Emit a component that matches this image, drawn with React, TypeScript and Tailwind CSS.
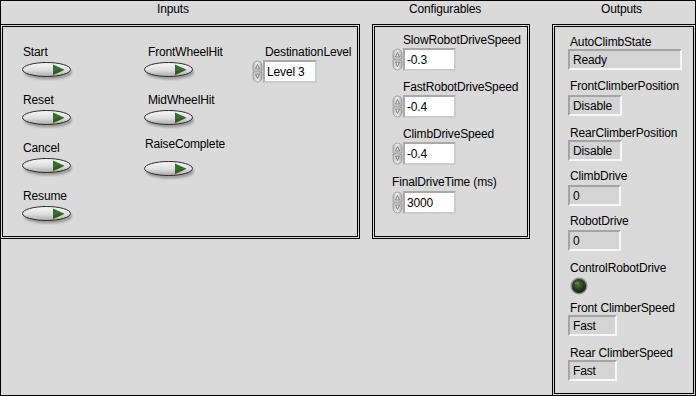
import type { ReactNode } from 'react';

// ─── Front Panel Data ─────────────────────────────────────────────────────────

const BUTTONS_LEFT = ['Start', 'Reset', 'Cancel', 'Resume'];

const CONFIGURABLES = [
  { label: 'SlowRobotDriveSpeed', value: '-0.3', labelClass: 'pl-[11px]', top: 'mt-0', boxTop: 'mt-px' },
  { label: 'FastRobotDriveSpeed', value: '-0.4', labelClass: 'pl-[11px]', top: 'mt-[9px]', boxTop: 'mt-px' },
  { label: 'ClimbDriveSpeed', value: '-0.4', labelClass: 'pl-[11px]', top: 'mt-[9px]', boxTop: 'mt-px' },
  { label: 'FinalDriveTime (ms)', value: '3000', labelClass: 'pl-0', top: 'mt-[10px]', boxTop: 'mt-[2px]' },
];

// ─── Small Drawings ───────────────────────────────────────────────────────────

function PushButton() {
  return (
    <svg width="52" height="20" viewBox="0 0 52 20" className="block">
      <defs>
        <linearGradient id="btnFill" x1="0" y1="0" x2="0" y2="1">
          <stop offset="0%" stopColor="#f8f8f8" />
          <stop offset="55%" stopColor="#dedede" />
          <stop offset="100%" stopColor="#a9a9a9" />
        </linearGradient>
        <filter id="btnShadow" x="-20%" y="-40%" width="140%" height="180%">
          <feGaussianBlur stdDeviation="1.1" />
        </filter>
      </defs>
      <ellipse cx="27" cy="11.5" rx="24" ry="7" fill="#5f5f5f" opacity="0.5" filter="url(#btnShadow)" />
      <ellipse cx="25.5" cy="8.5" rx="24" ry="7" fill="url(#btnFill)" stroke="#2a2a2a" strokeWidth="1" />
      <polygon points="32,3.5 32,14 43.5,8.75" fill="#2b7524" />
      <polygon points="32,10.5 32,14 43.5,8.75" fill="#5a3f1d" opacity="0.75" />
    </svg>
  );
}

function Spinner() {
  return (
    <svg width="11" height="23" viewBox="0 0 11 23" className="block shrink-0">
      <defs>
        <linearGradient id="spinFill" x1="0" y1="0" x2="1" y2="0">
          <stop offset="0%" stopColor="#bdbdbd" />
          <stop offset="50%" stopColor="#ececec" />
          <stop offset="100%" stopColor="#aaaaaa" />
        </linearGradient>
      </defs>
      <path d="M1 11 V5.5 A4.5 4.5 0 0 1 10 5.5 V11 Z" fill="url(#spinFill)" stroke="#949494" strokeWidth="0.8" />
      <path d="M1 12 V17.5 A4.5 4.5 0 0 0 10 17.5 V12 Z" fill="url(#spinFill)" stroke="#949494" strokeWidth="0.8" />
      <path d="M3.5 9 L5.5 4.5 L7.5 9 Z" fill="none" stroke="#767676" strokeWidth="0.9" />
      <path d="M3.5 14 L5.5 18.5 L7.5 14 Z" fill="none" stroke="#767676" strokeWidth="0.9" />
    </svg>
  );
}

function Led() {
  return (
    <svg width="18" height="18" viewBox="0 0 18 18" className="block">
      <defs>
        <radialGradient id="ledFill" cx="45%" cy="40%" r="60%">
          <stop offset="0%" stopColor="#4f6f3a" />
          <stop offset="60%" stopColor="#2a3f1c" />
          <stop offset="100%" stopColor="#142010" />
        </radialGradient>
      </defs>
      <circle cx="9" cy="9" r="8.5" fill="#8a8a8a" />
      <circle cx="9" cy="9" r="7" fill="url(#ledFill)" />
      <ellipse cx="7" cy="6" rx="2.5" ry="1.6" fill="#7d9a66" opacity="0.5" />
    </svg>
  );
}

// ─── Building Blocks ──────────────────────────────────────────────────────────

function Frame({ className, children }: { className: string; children: ReactNode }) {
  return (
    <div className={`border border-black p-px ${className}`}>
      <div className="h-full border border-black">{children}</div>
    </div>
  );
}

function NumericControl({ value, width = 'w-[53px]' }: { value: string; width?: string }) {
  return (
    <div className="flex items-start">
      <Spinner />
      <div
        className={`flex h-[23px] ${width} items-center border-2 border-[#cdcdcd] border-l-[#a9a9a9] border-t-[#a9a9a9] bg-white pl-[2px]`}
      >
        {value}
      </div>
    </div>
  );
}

function Indicator({ value, width, className = '' }: { value: string; width: string; className?: string }) {
  return (
    <div
      className={`flex h-[21px] ${width} items-center border-2 border-b-[#f7f7f7] border-l-[#a4a4a4] border-r-[#f7f7f7] border-t-[#a4a4a4] bg-[#d4d4d4] pl-[3px] ${className}`}
    >
      {value}
    </div>
  );
}

// ─── Component ────────────────────────────────────────────────────────────────

export default function App() {
  return (
    <div className="flex h-[396px] w-[696px] overflow-hidden bg-[#dadada] font-['Liberation_Sans',Arial,sans-serif] text-[12px] leading-[14px] tracking-[-0.15px] text-black shadow-[inset_0_0_0_1px_#000]">
      {/* Inputs */}
      <section className="flex w-[360px] flex-col">
        <h2 className="h-6 pl-[157px] pt-[2px] font-normal">Inputs</h2>
        <Frame className="h-[215px]">
          <div className="flex pl-[18px] pt-[18px]">
            <div className="w-[122px]">
              {BUTTONS_LEFT.map((name, i) => (
                <div key={name} className={i === 0 ? '' : 'mt-[12px]'}>
                  <p className="pl-[2px]">{name}</p>
                  <div className="mt-[2px]">
                    <PushButton />
                  </div>
                </div>
              ))}
            </div>

            <div className="w-[109px]">
              <p className="pl-[5px]">FrontWheelHit</p>
              <div className="mt-[2px]">
                <PushButton />
              </div>
              <p className="mt-[12px] pl-[5px]">MidWheelHit</p>
              <div className="mt-[2px]">
                <PushButton />
              </div>
              <p className="mt-[8px] pl-[2px]">RaiseComplete</p>
              <div className="mt-[9px]">
                <PushButton />
              </div>
            </div>

            <div>
              <p className="pl-[13px]">DestinationLevel</p>
              <div className="mt-px">
                <NumericControl value="Level 3" width="w-[54px]" />
              </div>
            </div>
          </div>
        </Frame>
      </section>

      {/* Configurables */}
      <section className="ml-3 flex w-[158px] flex-col">
        <h2 className="h-6 pl-[37px] pt-[2px] font-normal">Configurables</h2>
        <Frame className="h-[215px]">
          <div className="pl-[17px] pt-[6px]">
            {CONFIGURABLES.map((item) => (
              <div key={item.label} className={item.top}>
                <p className={item.labelClass}>{item.label}</p>
                <div className={item.boxTop}>
                  <NumericControl value={item.value} />
                </div>
              </div>
            ))}
          </div>
        </Frame>
      </section>

      {/* Outputs */}
      <section className="ml-[22px] flex w-[144px] flex-col">
        <h2 className="h-6 pl-[49px] pt-[2px] font-normal">Outputs</h2>
        <Frame className="h-[372px]">
          <div className="pl-[13px] pt-[8px]">
            <p className="pl-[2px]">AutoClimbState</p>
            <Indicator value="Ready" width="w-[114px]" />

            <p className="mt-[9px] pl-[2px]">FrontClimberPosition</p>
            <Indicator value="Disable" width="w-[54px]" className="mt-[2px]" />

            <p className="mt-[10px] pl-[2px]">RearClimberPosition</p>
            <Indicator value="Disable" width="w-[54px]" />

            <p className="mt-[8px] pl-[2px]">ClimbDrive</p>
            <Indicator value="0" width="w-[53px]" className="mt-[2px]" />

            <p className="mt-[8px] pl-[2px]">RobotDrive</p>
            <Indicator value="0" width="w-[53px]" className="mt-[2px]" />

            <p className="mt-[10px] pl-[2px]">ControlRobotDrive</p>
            <div className="mt-[2px] pl-[2px]">
              <Led />
            </div>

            <p className="mt-[6px] pl-[2px]">Front ClimberSpeed</p>
            <Indicator value="Fast" width="w-[49px]" />

            <p className="mt-[10px] pl-[2px]">Rear ClimberSpeed</p>
            <Indicator value="Fast" width="w-[49px]" />
          </div>
        </Frame>
      </section>
    </div>
  );
}
